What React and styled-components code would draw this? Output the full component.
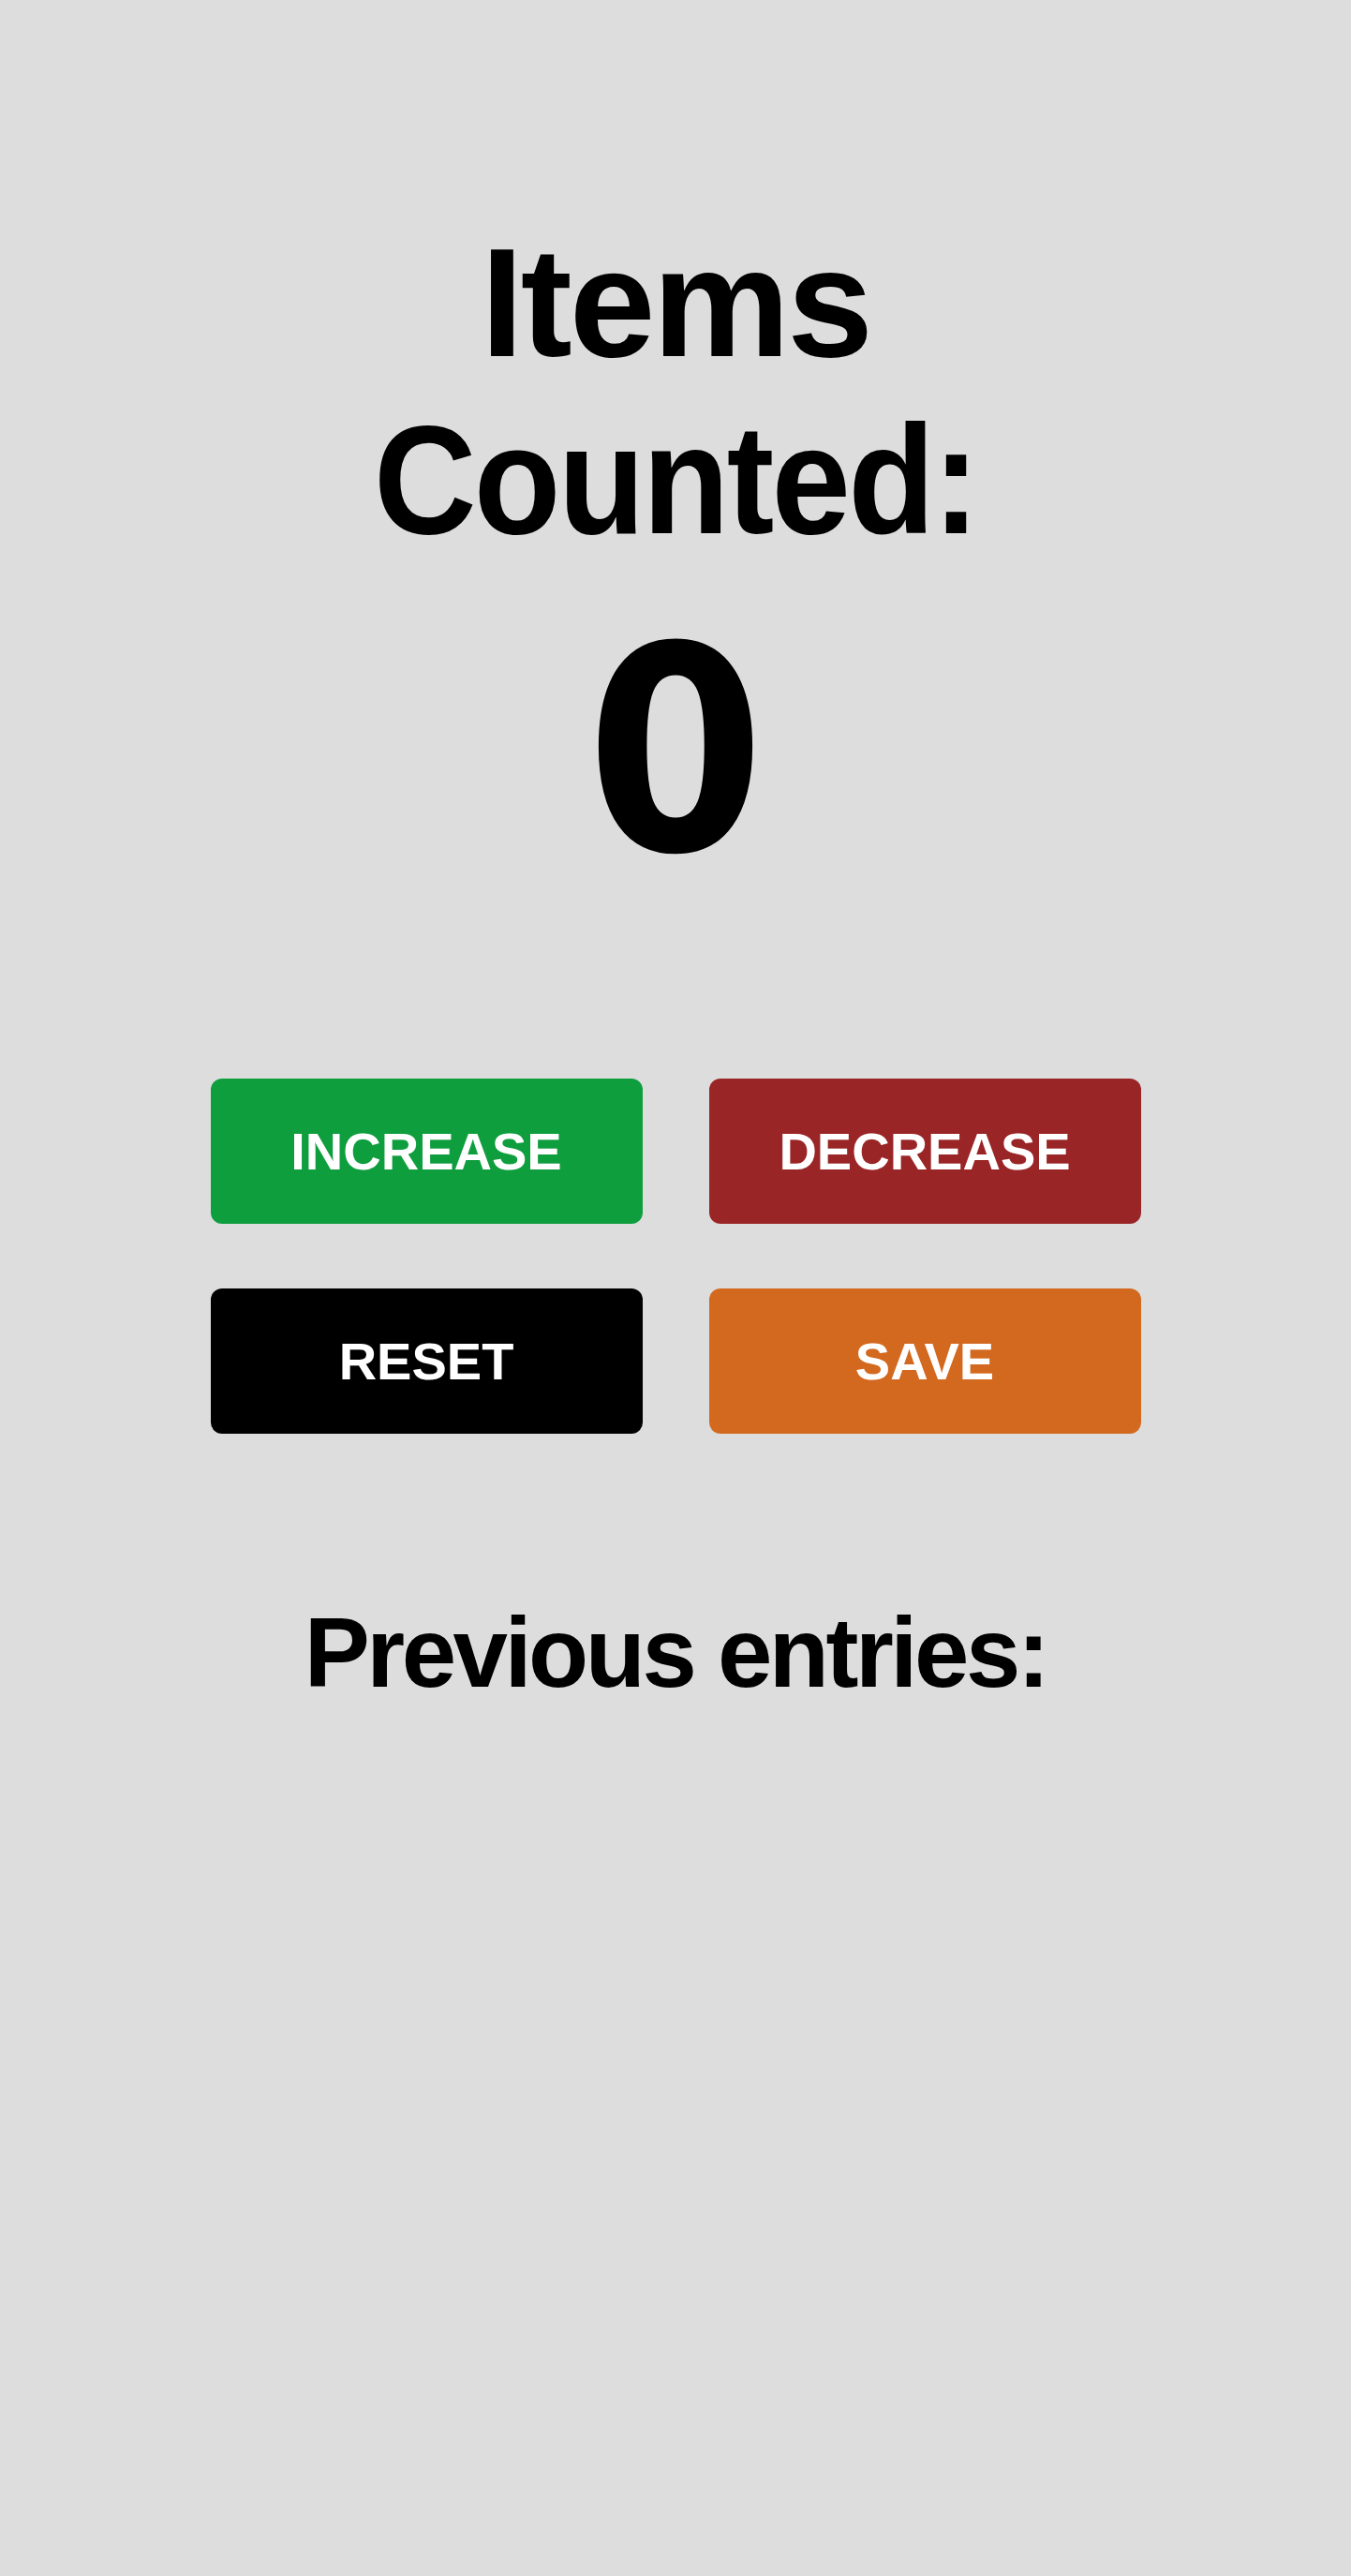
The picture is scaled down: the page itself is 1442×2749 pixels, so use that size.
import React, { useState } from 'react';
import styled, { createGlobalStyle } from 'styled-components';

const GlobalStyle = createGlobalStyle`
  html, body {
    margin: 0;
    padding: 0;
    background: #dddddd;
  }
  body {
    font-family: "Liberation Sans", Arial, sans-serif;
    color: #000;
  }
`;

const Page = styled.div`
  min-height: 2749px;
  display: flex;
  flex-direction: column;
  align-items: center;
  padding-top: 229px;
  box-sizing: border-box;
`;

const Title = styled.h1`
  margin: 0;
  font-size: 165px;
  line-height: 189px;
  font-weight: 700;
  text-align: center;
  letter-spacing: -3px;
`;

const TitleLine = styled.span`
  display: block;
  transform: scaleX(${props => props.squeeze || 1});
`;

const Count = styled.div`
  margin-top: 14px;
  font-family: "DejaVu Sans Condensed", "DejaVu Sans", sans-serif;
  font-stretch: condensed;
  font-size: 304px;
  font-weight: 700;
  line-height: 363px;
  text-align: center;
`;

const ButtonGrid = styled.div`
  margin-top: 167px;
  display: grid;
  grid-template-columns: 461px 461px;
  column-gap: 71px;
  row-gap: 69px;
`;

const Button = styled.button`
  height: 155px;
  border: none;
  border-radius: 12px;
  background: ${props => props.bg};
  color: #fff;
  font-family: "Liberation Sans", Arial, sans-serif;
  font-size: 56px;
  font-weight: 700;
  cursor: pointer;
  padding: 0;
`;

const SubTitle = styled.h2`
  margin: 173px 0 0;
  font-size: 105px;
  line-height: 121px;
  font-weight: 700;
  letter-spacing: -3.5px;
  text-align: center;
`;

const EntryList = styled.ul`
  list-style: none;
  margin: 20px 0 0;
  padding: 0;
  font-size: 48px;
`;

export default function App() {
  const [count, setCount] = useState(0);
  const [entries, setEntries] = useState([]);

  return (
    <Page>
      <GlobalStyle />
      <Title>
        <TitleLine>Items</TitleLine>
        <TitleLine squeeze={0.92}>Counted:</TitleLine>
      </Title>
      <Count>{count}</Count>
      <ButtonGrid>
        <Button bg="#0f9e3e" onClick={() => setCount(c => c + 1)}>INCREASE</Button>
        <Button bg="#9a2526" onClick={() => setCount(c => Math.max(0, c - 1))}>DECREASE</Button>
        <Button bg="#000000" onClick={() => setCount(0)}>RESET</Button>
        <Button bg="#d3691f" onClick={() => { setEntries(e => [...e, count]); setCount(0); }}>SAVE</Button>
      </ButtonGrid>
      <SubTitle>Previous entries:</SubTitle>
      <EntryList>
        {entries.map((e, i) => <li key={i}>{e}</li>)}
      </EntryList>
    </Page>
  );
}
